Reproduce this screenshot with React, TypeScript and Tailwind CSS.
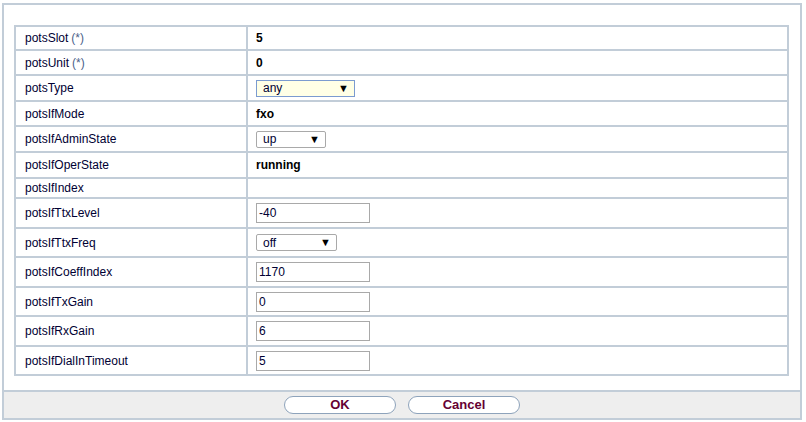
import React from "react";

type Row = {
  label: string;
  star?: boolean;
  h: number;
  kind: "text" | "select" | "input" | "empty";
  value?: string;
  w?: number;
  focus?: boolean;
};

const rows: Row[] = [
  { label: "potsSlot", star: true, h: 22, kind: "text", value: "5" },
  { label: "potsUnit", star: true, h: 23, kind: "text", value: "0" },
  { label: "potsType", h: 24, kind: "select", value: "any", w: 99, focus: true },
  { label: "potsIfMode", h: 23, kind: "text", value: "fxo" },
  { label: "potsIfAdminState", h: 24, kind: "select", value: "up", w: 70 },
  { label: "potsIfOperState", h: 24, kind: "text", value: "running" },
  { label: "potsIfIndex", h: 18, kind: "empty" },
  { label: "potsIfTtxLevel", h: 28, kind: "input", value: "-40" },
  { label: "potsIfTtxFreq", h: 27, kind: "select", value: "off", w: 81 },
  { label: "potsIfCoeffIndex", h: 28, kind: "input", value: "1170" },
  { label: "potsIfTxGain", h: 27, kind: "input", value: "0" },
  { label: "potsIfRxGain", h: 28, kind: "input", value: "6" },
  { label: "potsIfDialInTimeout", h: 27, kind: "input", value: "5" },
];

function Value({ r }: { r: Row }) {
  if (r.kind === "text")
    return <span className="font-bold text-[12px] text-black">{r.value}</span>;
  if (r.kind === "select")
    return (
      <div
        className={
          "flex items-center justify-between h-[17px] pl-[6px] pr-[5px] text-[12px] leading-none " +
          (r.focus
            ? "border border-[#7b9bd0] bg-[#ffffe6]"
            : "border border-[#a9a9a9] bg-white rounded-[2px]")
        }
        style={{ width: r.w }}
      >
        <span className="text-[#000033]">{r.value}</span>
        <span className="text-[11px] text-black">▼</span>
      </div>
    );
  if (r.kind === "input")
    return (
      <div className="flex items-center w-[114px] h-[20px] border border-[#a9a9a9] bg-white pl-[2px] text-[12px] text-[#000033] leading-none">
        {r.value}
      </div>
    );
  return null;
}

export default function App() {
  return (
    <div
      className="w-[806px] h-[422px] bg-white pl-[2px] pt-[3px]"
      style={{ fontFamily: '"Liberation Sans", Arial, sans-serif' }}
    >
      <div className="w-[800px] h-[417px] border-2 border-[#c2cdd8] flex flex-col">
        <div className="flex-1 pl-[10px] pr-[11px] pt-[20px]">
          <div className="grid grid-cols-[230px_539px] gap-[2px] p-[2px] bg-[#c2cdd8]">
            {rows.map((r) => (
              <React.Fragment key={r.label}>
                <div
                  className="bg-white flex items-center pl-[9px] text-[12px] text-[#000033]"
                  style={{ height: r.h }}
                >
                  {r.label}
                  {r.star && <span className="text-[#4a5f8a] ml-[3px]">(*)</span>}
                </div>
                <div className="bg-white flex items-center pl-[8px]" style={{ height: r.h }}>
                  <Value r={r} />
                </div>
              </React.Fragment>
            ))}
          </div>
        </div>
        <div className="h-[28px] border-t-2 border-[#c2cdd8] bg-[#eeeeee] flex items-center justify-center gap-[12px] pb-[1px]">
          <button className="w-[112px] h-[18px] rounded-full border border-[#8ea3bb] bg-white text-[13px] font-bold text-[#660033] leading-none flex items-center justify-center">
            OK
          </button>
          <button className="w-[112px] h-[18px] rounded-full border border-[#8ea3bb] bg-white text-[13px] font-bold text-[#660033] leading-none flex items-center justify-center">
            Cancel
          </button>
        </div>
      </div>
    </div>
  );
}
